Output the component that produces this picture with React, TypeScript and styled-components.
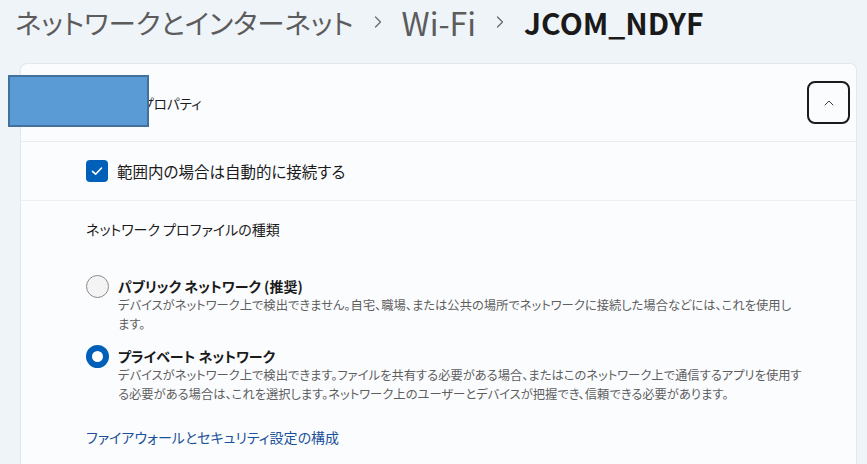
import React from "react";
import styled, { createGlobalStyle } from "styled-components";
import { ChevronUp, ChevronRight } from "lucide-react";

const GlobalStyle = createGlobalStyle`
  body {
    margin: 0;
    background: #eff4f9;
    font-family: "Noto Sans CJK JP", "Noto Sans", sans-serif;
    font-feature-settings: "palt";
    color: #1b1b1b;
  }
`;

const Page = styled.div`
  position: relative;
  padding: 0 10px 0 20px;
  height: 464px;
  overflow: hidden;
`;

const Breadcrumb = styled.div`
  display: flex;
  align-items: center;
  gap: 14px;
  height: 44px;
  margin-left: -5px;
  margin-bottom: 19px;
  line-height: 44px;
  white-space: nowrap;
`;

const Crumb = styled.span<{ $current?: boolean; $size: number }>`
  font-size: ${(p) => p.$size}px;
  color: ${(p) => (p.$current ? "#1a1a1a" : "#5c5c5c")};
  font-weight: ${(p) => (p.$current ? 600 : 400)};
`;

const Sep = styled(ChevronRight)`
  color: #6a6a6a;
  flex: none;
`;

const Card = styled.div`
  background: #fbfcfe;
  border: 1px solid #e3e7ec;
  border-bottom: none;
  border-radius: 7px 7px 0 0;
  height: 420px;
`;

const ExpanderHeader = styled.div`
  display: flex;
  align-items: center;
  justify-content: space-between;
  height: 77px;
  padding: 0 6px 0 40px;
  border-bottom: 1px solid #e8ebef;
  font-size: 13.5px;
`;

const ToggleButton = styled.button`
  display: flex;
  align-items: center;
  justify-content: center;
  width: 43px;
  height: 43px;
  padding: 0;
  background: transparent;
  border: 2px solid #1b1b1b;
  border-radius: 8px;
  color: #3a3a3a;
`;

const CheckRow = styled.label`
  display: flex;
  align-items: center;
  gap: 9px;
  height: 58px;
  padding-left: 65px;
  border-bottom: 1px solid #eceff2;
  font-size: 15.5px;
`;

const CheckBox = styled.span`
  display: flex;
  align-items: center;
  justify-content: center;
  width: 22px;
  height: 22px;
  border-radius: 4px;
  background: #005fb8;
`;

const Section = styled.div`
  padding: 18px 40px 0 65px;
`;

const SectionTitle = styled.div`
  font-size: 14px;
  line-height: 20px;
  margin-bottom: 37px;
`;

const Option = styled.div`
  display: flex;
  align-items: flex-start;
  gap: 9px;
  margin-bottom: 12px;
`;

const Radio = styled.span<{ $checked?: boolean }>`
  flex: none;
  box-sizing: border-box;
  width: 23px;
  height: 23px;
  margin-top: -1px;
  border-radius: 50%;
  border: ${(p) => (p.$checked ? "6px solid #005fb8" : "1px solid #8b8b8b")};
  background: ${(p) => (p.$checked ? "#ffffff" : "#f4f4f4")};
`;

const OptionText = styled.div`
  display: flex;
  flex-direction: column;
`;

const OptionTitle = styled.div`
  font-size: 14px;
  font-weight: 700;
  line-height: 20px;
  color: #1a1a1a;
`;

const OptionDesc = styled.div`
  font-size: 12.3px;
  line-height: 19px;
  color: #5e5e5e;
  white-space: nowrap;
`;

const Link = styled.a`
  display: block;
  margin-top: 23px;
  font-size: 14px;
  line-height: 20px;
  color: #1a5199;
  text-decoration: none;
`;

const Redaction = styled.div`
  position: absolute;
  left: 8px;
  top: 75px;
  width: 137px;
  height: 48px;
  background: #5b9bd5;
  border: 2px solid #41719c;
`;

const App = () => {
  return (
    <Page>
      <GlobalStyle />
      <Breadcrumb>
        <Crumb $size={27.5}>ネットワークとインターネット</Crumb>
        <Sep size={20} strokeWidth={1.5} />
        <Crumb $size={32}>Wi-Fi</Crumb>
        <Sep size={20} strokeWidth={1.5} />
        <Crumb $current $size={30}>JCOM_NDYF</Crumb>
      </Breadcrumb>
      <Card>
        <ExpanderHeader>
          <span>JCOM_NDYF プロパティ</span>
          <ToggleButton>
            <ChevronUp size={16} strokeWidth={1.5} />
          </ToggleButton>
        </ExpanderHeader>
        <CheckRow>
          <CheckBox>
            <svg width="14" height="14" viewBox="0 0 14 14">
              <path d="M2.5 7.3 L5.6 10.2 L11.5 4" fill="none" stroke="#fff" strokeWidth="1.6" strokeLinecap="round" strokeLinejoin="round" />
            </svg>
          </CheckBox>
          範囲内の場合は自動的に接続する
        </CheckRow>
        <Section>
          <SectionTitle>ネットワーク プロファイルの種類</SectionTitle>
          <Option>
            <Radio />
            <OptionText>
              <OptionTitle>パブリック ネットワーク (推奨)</OptionTitle>
              <OptionDesc>デバイスがネットワーク上で検出できません。自宅、職場、または公共の場所でネットワークに接続した場合などには、これを使用し</OptionDesc>
              <OptionDesc>ます。</OptionDesc>
            </OptionText>
          </Option>
          <Option>
            <Radio $checked />
            <OptionText>
              <OptionTitle>プライベート ネットワーク</OptionTitle>
              <OptionDesc>デバイスがネットワーク上で検出できます。ファイルを共有する必要がある場合、またはこのネットワーク上で通信するアプリを使用す</OptionDesc>
              <OptionDesc>る必要がある場合は、これを選択します。ネットワーク上のユーザーとデバイスが把握でき、信頼できる必要があります。</OptionDesc>
            </OptionText>
          </Option>
          <Link href="#">ファイアウォールとセキュリティ設定の構成</Link>
        </Section>
      </Card>
      <Redaction />
    </Page>
  );
};

export default App;
